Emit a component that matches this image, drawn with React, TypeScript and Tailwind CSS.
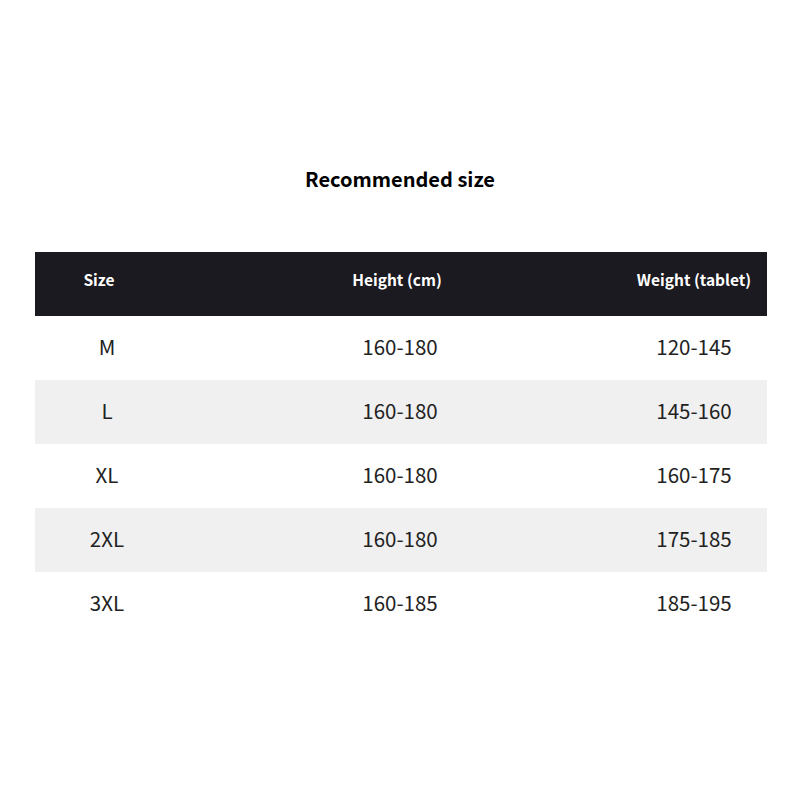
const rows = [
  { size: "M", height: "160-180", weight: "120-145" },
  { size: "L", height: "160-180", weight: "145-160" },
  { size: "XL", height: "160-180", weight: "160-175" },
  { size: "2XL", height: "160-180", weight: "175-185" },
  { size: "3XL", height: "160-185", weight: "185-195" },
];

export default function App() {
  return (
    <div
      className="h-[800px] w-[800px] bg-white pt-[164px]"
      style={{ fontFamily: '"Noto Sans CJK SC", "Noto Sans", sans-serif' }}
    >
      <h1 className="text-center text-[20px] font-bold leading-[30px] text-black">Recommended size</h1>

      <div className="ml-[35px] mt-[58px] w-[732px]">
        <div className="grid h-[64px] grid-cols-[144px_442px_146px] items-center bg-[#1b1a20] pb-[8px] text-[15.5px] font-bold text-white">
          <div className="pr-[16px] text-center">Size</div>
          <div className="pr-[6px] text-center">Height (cm)</div>
          <div className="text-center">Weight (tablet)</div>
        </div>
        {rows.map((r, i) => (
          <div
            key={r.size}
            className={`grid h-[64px] grid-cols-[144px_442px_146px] items-center pb-[3px] text-[20.5px] text-[#222] ${
              i % 2 === 1 ? "bg-[#f0f0f0]" : "bg-white"
            }`}
          >
            <div className="text-center">{r.size}</div>
            <div className="text-center">{r.height}</div>
            <div className="text-center">{r.weight}</div>
          </div>
        ))}
      </div>
    </div>
  );
}
